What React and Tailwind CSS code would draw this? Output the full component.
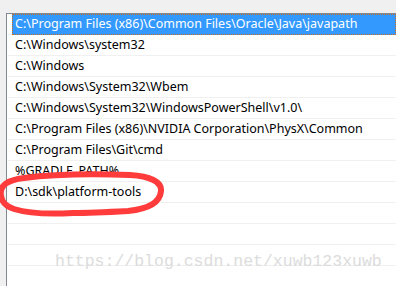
import React from "react";

const rows = [
  "C:\\Program Files (x86)\\Common Files\\Oracle\\Java\\javapath",
  "C:\\Windows\\system32",
  "C:\\Windows",
  "C:\\Windows\\System32\\Wbem",
  "C:\\Windows\\System32\\WindowsPowerShell\\v1.0\\",
  "C:\\Program Files (x86)\\NVIDIA Corporation\\PhysX\\Common",
  "C:\\Program Files\\Git\\cmd",
  "%GRADLE_PATH%",
  "D:\\sdk\\platform-tools",
  "",
  "",
  "",
  "",
];

export default function App() {
  return (
    <div className="relative w-[396px] h-[286px] overflow-hidden bg-[#f0f0f0]" style={{ fontFamily: '"Noto Sans", "Noto Sans CJK SC", sans-serif' }}>
      <div className="absolute left-[6px] top-[13px] w-[420px] h-[300px] border-l border-t border-[#828790] bg-white">
        <div className="flex flex-col">
          {rows.map((t, i) => (
            <div key={i} className="h-[21px] ml-[1px] border-b border-[#f0f0f0] flex">
              {i === 0 ? (
                <div className="ml-[4px] w-[384px] h-[21px] bg-[#3399ff] border border-dotted border-[#c86a1c] flex items-center pl-[2px] text-white text-[12.5px] leading-none whitespace-nowrap">
                  {t}
                </div>
              ) : (
                <div className="ml-[5px] pl-[2px] h-[20px] flex items-center text-black text-[12.5px] leading-none whitespace-nowrap">
                  {t}
                </div>
              )}
            </div>
          ))}
        </div>
      </div>
      <div className="absolute left-[55px] top-[254px] text-[16.5px] leading-none text-[#dcdcdc] whitespace-nowrap" style={{ fontFamily: '"Liberation Mono", monospace' }}>
        https://blog.csdn.net/xuwb123xuwb
      </div>
      <svg className="absolute left-0 top-0" width="396" height="286" viewBox="0 0 396 286">
        <path
          d="M1 196 C -1 185, 8 180, 24 178 C 55 174, 100 174, 130 175 C 150 176, 162 182, 161 191 C 160 203, 148 209, 128 211 C 110 212, 90 213, 73 213 C 55 214, 30 214, 14 209 C 5 206, 2 202, 1 196"
          fill="none"
          stroke="#ff3b3b"
          strokeWidth="6"
          strokeLinecap="round"
        />
      </svg>
    </div>
  );
}
